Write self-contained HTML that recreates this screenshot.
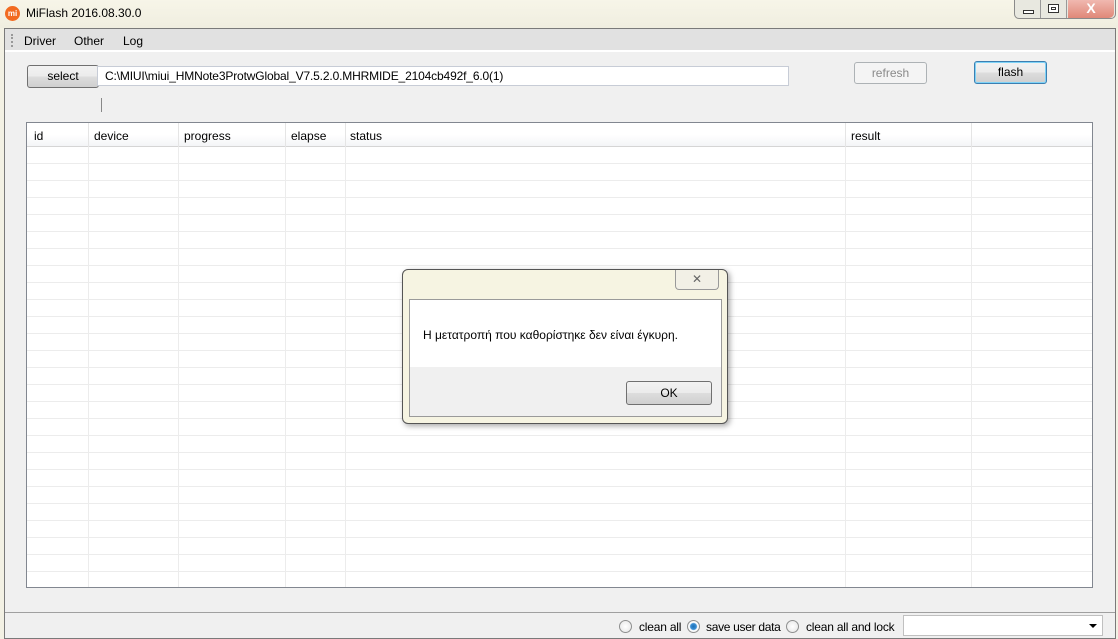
<!DOCTYPE html>
<html><head><meta charset="utf-8"><style>
*{box-sizing:border-box;margin:0;padding:0}
body{width:1118px;height:639px;overflow:hidden;background:#f3f1e4;font-family:"Liberation Sans",sans-serif;font-size:12px;color:#000;position:relative}
.abs{position:absolute}
.btn{position:absolute;border:1px solid #707070;border-radius:3px;background:linear-gradient(#f2f2f2,#ebebeb 50%,#dddddd 51%,#cfcfcf);text-align:center;font-size:12px}
.col{position:absolute;top:0;bottom:0;width:1px;background:#ececec}
.radio{position:absolute;width:13px;height:13px;border-radius:50%;border:1px solid #8e8f8f;background:radial-gradient(#fff,#e4e4e4)}
</style></head><body>
<div class="abs" style="left:0;top:0;width:1118px;height:28px;background:linear-gradient(#f7f5e8,#f0eee0)"></div>
<div class="abs" style="left:5px;top:6px;width:15px;height:15px;border-radius:50%;background:#f26b21;color:#fff;font-size:8px;text-align:center;line-height:15px;font-weight:bold">mi</div>
<div class="abs" style="left:26px;top:6px;font-size:12px">MiFlash 2016.08.30.0</div>
<div class="abs" style="left:1014px;top:0;width:102px;height:19px;border:1px solid #8a8a8a;border-top:none;border-radius:0 0 5px 5px;background:#e8e8e0"></div>
<div class="abs" style="left:1040px;top:0;width:1px;height:18px;background:#999"></div>
<div class="abs" style="left:1066px;top:0;width:1px;height:18px;background:#999"></div>
<div class="abs" style="left:1023px;top:10px;width:11px;height:4px;border:1px solid #333;background:#fff"></div>
<div class="abs" style="left:1048px;top:4px;width:11px;height:9px;border:1px solid #333;background:#fff"><div style="margin:2px;width:5px;height:3px;border:1px solid #333"></div></div>
<div class="abs" style="left:1068px;top:0;width:46px;height:18px;background:linear-gradient(#f0b8b0,#e08878);border-radius:0 0 5px 0;color:#fff;font-weight:bold;font-size:14px;text-align:center;line-height:17px">X</div>
<div class="abs" style="left:4px;top:28px;width:1112px;height:611px;border:1px solid #7a7a7a;background:#f0f0f0">
 <div class="abs" style="left:0;top:0;right:0;height:23px;background:#e1e1e1;border-bottom:2px solid #fff"></div>
 <div class="abs" style="left:6px;top:5px;width:2px;height:13px;border-left:2px dotted #999"></div>
 <div class="abs" style="left:19px;top:5px">Driver</div>
 <div class="abs" style="left:69px;top:5px">Other</div>
 <div class="abs" style="left:118px;top:5px">Log</div>
 <div class="btn" style="left:22px;top:36px;width:72px;height:23px;line-height:21px">select</div>
 <div class="abs" style="left:92px;top:37px;width:692px;height:20px;border:1px solid #c7ccd6;background:#fff;padding:2px 0 0 7px;letter-spacing:-0.15px">C:\MIUI\miui_HMNote3ProtwGlobal_V7.5.2.0.MHRMIDE_2104cb492f_6.0(1)</div>
 <div class="abs" style="left:96px;top:69px;width:1px;height:14px;background:#888"></div>
 <div class="abs" style="left:849px;top:33px;width:73px;height:22px;border:1px solid #adb2b5;border-radius:3px;background:#f4f4f4;color:#8a8a8a;text-align:center;line-height:20px">refresh</div>
 <div class="btn" style="left:969px;top:32px;width:73px;height:23px;line-height:20px;border-color:#3c7fb1;box-shadow:inset 0 0 0 1px #7fd3f7">flash</div>
 <div class="abs" style="left:21px;top:93px;width:1067px;height:466px;border:1px solid #828790;background:#fff;overflow:hidden">
  <div class="abs" style="left:0;top:0;right:0;height:24px;background:linear-gradient(#fff,#fff 50%,#f4f5f7);border-bottom:1px solid #d5d5d5"></div>
  <div class="abs" style="left:7px;top:6px">id</div>
  <div class="abs" style="left:67px;top:6px">device</div>
  <div class="abs" style="left:157px;top:6px">progress</div>
  <div class="abs" style="left:264px;top:6px">elapse</div>
  <div class="abs" style="left:323px;top:6px">status</div>
  <div class="abs" style="left:824px;top:6px">result</div>
  <div class="col" style="left:61px;background:#e5e5e5"></div>
  <div class="col" style="left:151px;background:#e5e5e5"></div>
  <div class="col" style="left:258px;background:#e5e5e5"></div>
  <div class="col" style="left:318px;background:#e5e5e5"></div>
  <div class="col" style="left:818px;background:#e5e5e5"></div>
  <div class="col" style="left:944px;background:#e5e5e5"></div>
  <div style="position:absolute;left:0;right:0;top:24px;bottom:0;background:repeating-linear-gradient(#fff 0,#fff 16px,#ececec 16px,#ececec 17px)"></div>
  <div class="col" style="left:61px;top:24px"></div>
  <div class="col" style="left:151px;top:24px"></div>
  <div class="col" style="left:258px;top:24px"></div>
  <div class="col" style="left:318px;top:24px"></div>
  <div class="col" style="left:818px;top:24px"></div>
  <div class="col" style="left:944px;top:24px"></div>
 </div>
 <div class="abs" style="left:0;top:583px;right:0;height:1px;background:#a0a0a0"></div>
 <div class="radio" style="left:614px;top:591px"></div>
 <div class="abs" style="left:634px;top:591px;letter-spacing:-0.2px">clean all</div>
 <div class="radio" style="left:682px;top:591px;background:radial-gradient(#1b6fb5 0,#3b8fd5 3px,#fff 4px,#e4e4e4)"></div>
 <div class="abs" style="left:701px;top:591px;letter-spacing:-0.3px">save user data</div>
 <div class="radio" style="left:781px;top:591px"></div>
 <div class="abs" style="left:801px;top:591px;letter-spacing:-0.2px">clean all and lock</div>
 <div class="abs" style="left:898px;top:586px;width:200px;height:21px;border:1px solid #c0c0c0;background:#fff"><div style="position:absolute;right:5px;top:8px;border:4px solid transparent;border-top:4px solid #000"></div></div>
</div>
<div class="abs" style="left:402px;top:269px;width:326px;height:155px;border:1px solid #555;border-radius:6px;background:#f6f4e2;box-shadow:2px 2px 6px rgba(0,0,0,.35)">
 <div class="abs" style="left:272px;top:0;width:44px;height:20px;border:1px solid #999;border-top:none;border-radius:0 0 4px 4px;background:#f2f0e6;text-align:center;color:#666;font-size:12px;line-height:18px">✕</div>
 <div class="abs" style="left:6px;top:29px;width:313px;height:118px;border:1px solid #9a9a9a;background:#f0f0f0">
  <div class="abs" style="left:0;top:0;right:0;height:67px;background:#fff"></div>
  <div class="abs" style="left:13px;top:28px">Η μετατροπή που καθορίστηκε δεν είναι έγκυρη.</div>
  <div class="btn" style="left:216px;top:81px;width:86px;height:24px;line-height:22px">OK</div>
 </div>
</div>
</body></html>
